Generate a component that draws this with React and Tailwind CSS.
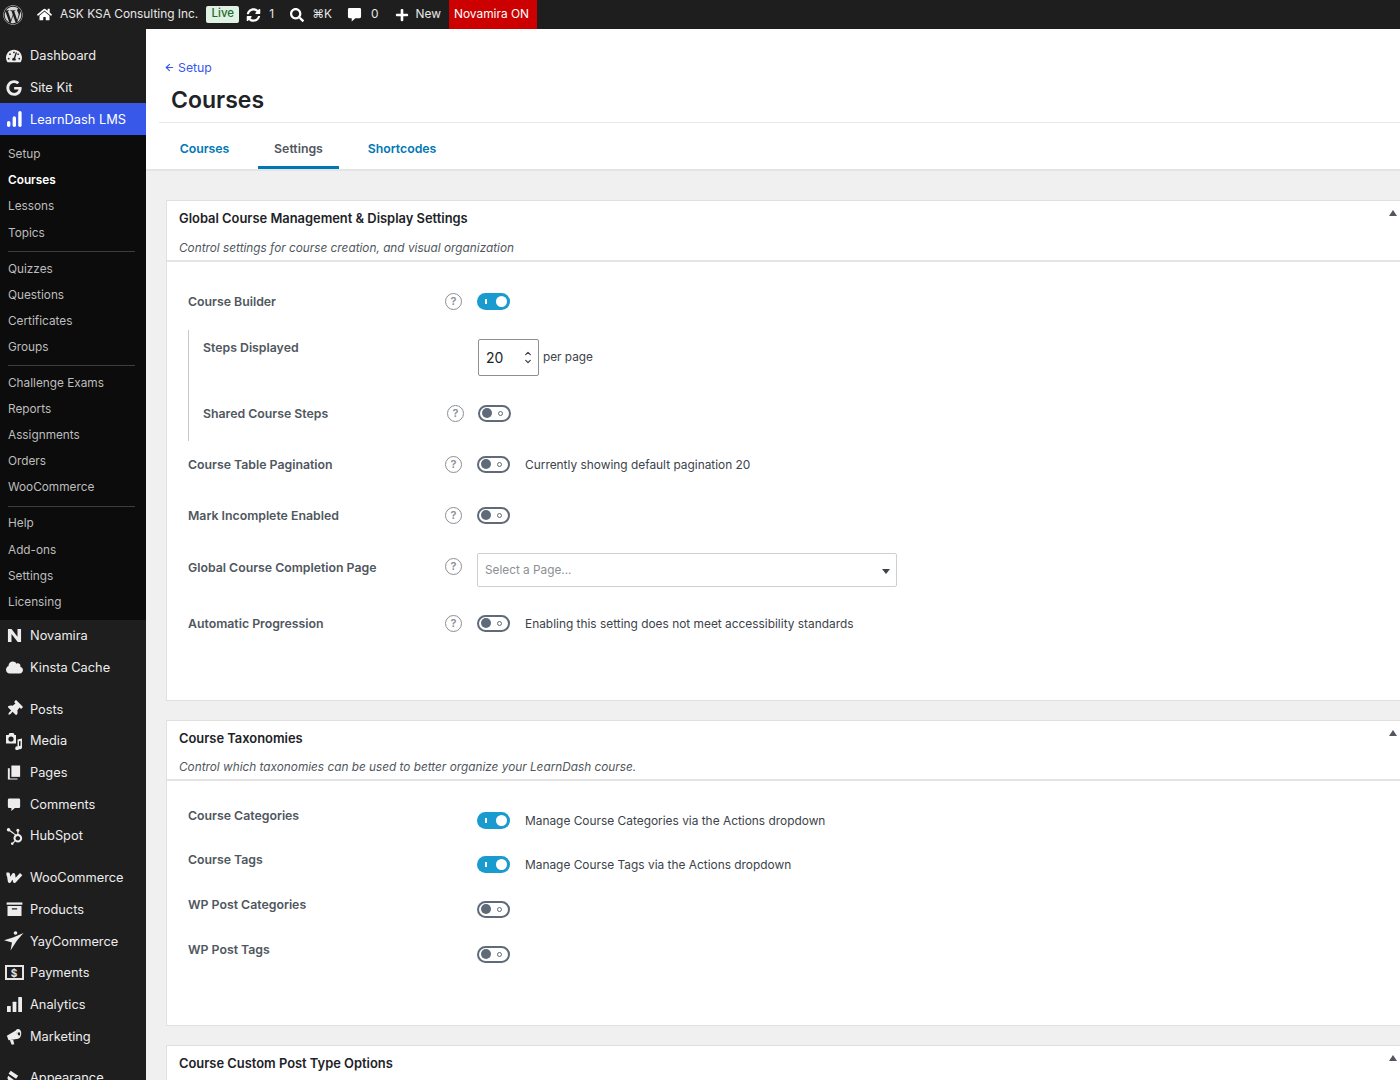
import React from 'react';
import { FaWordpress, FaHome, FaSyncAlt, FaSearch, FaPlus, FaTachometerAlt, FaGoogle, FaThumbtack, FaCloud, FaHubspot } from 'react-icons/fa';
import { ArrowLeft, ChevronUp, ChevronDown } from 'lucide-react';

const Bars = ({ className }) => (
    <svg viewBox="0 0 16 16" className={className} fill="currentColor">
        <rect x="0" y="9.5" width="4" height="6.5" rx="0.6" />
        <rect x="6" y="5" width="4" height="11" rx="0.6" />
        <rect x="12" y="0" width="4" height="16" rx="0.6" />
    </svg>
);

const RoundBars = ({ className }) => (
    <svg viewBox="0 0 16 17" className={className} fill="currentColor">
        <rect x="0" y="10.5" width="3.6" height="6.5" rx="1.8" />
        <rect x="6" y="5.5" width="3.6" height="11.5" rx="1.8" />
        <rect x="12" y="0" width="3.6" height="17" rx="1.8" />
    </svg>
);

const NIcon = ({ className }) => (
    <svg viewBox="0 0 16 16" className={className} fill="currentColor">
        <path d="M1 1h3.8l6.4 8.4V1H15v14h-3.6L4.8 6.4V15H1z" />
    </svg>
);

const MediaIcon = ({ className }) => (
    <svg viewBox="0 0 18 18" className={className} fill="currentColor">
        <path fillRule="evenodd" d="M1 3h2.5l1-2h4l1 2H11v8.5H1zM6 4.4a2.6 2.6 0 1 0 0 5.2 2.6 2.6 0 0 0 0-5.2z" />
        <path d="M12.5 7.5l4.5-1v9a1.8 1.8 0 1 1-1.5-1.8V9l-1.5.3v6.9A1.9 1.9 0 1 1 12.5 14.4z" />
    </svg>
);

const PagesIcon = ({ className }) => (
    <svg viewBox="0 0 16 16" className={className} fill="currentColor">
        <path d="M5 0h10v13H5z" />
        <path d="M1 3h2.2v11.8H12V16H1z" />
    </svg>
);

const BubbleIcon = ({ className }) => (
    <svg viewBox="0 0 16 16" className={className} fill="currentColor">
        <path d="M2.5 1h11A1.5 1.5 0 0 1 15 2.5v8a1.5 1.5 0 0 1-1.5 1.5H9l-4 3.5V12H2.5A1.5 1.5 0 0 1 1 10.5v-8A1.5 1.5 0 0 1 2.5 1z" />
    </svg>
);

const WooIcon = ({ className }) => (
    <svg viewBox="0 0 20 12" className={className} fill="none" stroke="currentColor" strokeWidth="3.4" strokeLinejoin="round">
        <path d="M1.5 2h2l1.2 7.5L9 2.5l1 7 L17 2" />
    </svg>
);

const BoxIcon = ({ className }) => (
    <svg viewBox="0 0 18 16" className={className} fill="currentColor">
        <rect x="0" y="0.5" width="18" height="2.6" />
        <path fillRule="evenodd" d="M1 4.5h16V16H1zM6 7v1.6h6V7z" />
    </svg>
);

const YayIcon = ({ className }) => (
    <svg viewBox="0 0 20 20" className={className} fill="currentColor">
        <circle cx="11.5" cy="2" r="1.8" />
        <path d="M0 9.2L9 6.5 19.5 2 13 9.5 6.5 19.5 8 11.5z" />
    </svg>
);

const PayIcon = () => (
    <span className="flex h-[15px] w-[19px] items-center justify-center border-2 border-[#e4e4e4] text-[10px] font-bold leading-none text-[#e4e4e4]">$</span>
);

const MegaphoneIcon = ({ className }) => (
    <svg viewBox="0 0 20 20" className={className} fill="currentColor">
        <path d="M1 9l10.5-6 3 9.5L3 14.5z" />
        <path fillRule="evenodd" d="M11.5 2.5c1.5-1.6 3.6-1.8 5-.3 1.8 2 2 6 .4 8.3-1.1 1.6-2.4 2.2-3.6 1.9zM15 5c-.9 0-1.4 1-1.2 2.2.2 1.1 1 1.9 1.8 1.7.8-.2 1.2-1.2 1-2.2-.2-1.1-.9-1.7-1.6-1.7z" />
        <path d="M4.5 14.5l4-.7 1.2 5.2-3 .6z" />
    </svg>
);

const BrushIcon = ({ className }) => (
    <svg viewBox="0 0 18 18" className={className} fill="currentColor">
        <path d="M5 1l9 6-2.5 3.5-9-6zM2 7l7 5-2 3-3.5-1L1 10z" />
    </svg>
);

const MenuItem = ({ icon, label, active, className = '' }) => (
    <div className={`flex h-[31.7px] items-center text-[12.8px] ${active ? 'bg-[#3858e9] text-white' : 'text-[#ededed]'} ${className}`}>
        <span className="mr-[2px] flex w-[28px] shrink-0 items-center justify-center">{icon}</span>
        <span>{label}</span>
    </div>
);

const SubItem = ({ label, current }) => (
    <div className={`flex h-[26.1px] items-center pl-2 text-[11.8px] ${current ? 'font-semibold text-white' : 'text-[#bdbdbd]'}`}>{label}</div>
);

const SubSep = () => <div className="my-[4.5px] ml-2 mr-[11px] h-px bg-[#3e3e3e]" />;

const Help = () => (
    <span className="flex h-[17px] w-[17px] shrink-0 items-center justify-center rounded-full border-[1.5px] border-[#8c8f94] text-[11px] font-semibold leading-none text-[#8c8f94]">?</span>
);

const Toggle = ({ on }) =>
    on ? (
        <span className="flex h-[17px] w-[33px] shrink-0 items-center justify-between rounded-full bg-[#1a9bd0] pl-[8px] pr-[3px]">
            <span className="h-[5px] w-[2px] bg-white" />
            <span className="h-[11px] w-[11px] rounded-full bg-white" />
        </span>
    ) : (
        <span className="flex h-[17px] w-[33px] shrink-0 items-center justify-between rounded-full border-2 border-[#5f6b78] pl-[2px] pr-[6px]">
            <span className="h-[10px] w-[10px] rounded-full bg-[#5f6b78]" />
            <span className="h-[5px] w-[5px] rounded-full border border-[#5f6b78]" />
        </span>
    );

const Label = ({ children, className = 'w-[257px] pt-[2px]' }) => (
    <div className={`shrink-0 text-[12.3px] font-semibold text-[#50575e] ${className}`}>{children}</div>
);

const Note = ({ children }) => <span className="ml-[15px] pt-[1px] text-[11.9px] text-[#3c434a]">{children}</span>;

const SettingRow = ({ label, on, note, className = '' }) => (
    <div className={`flex h-[34px] items-center ${className}`}>
        <Label>{label}</Label>
        <span className="w-[32px] shrink-0"><Help /></span>
        <Toggle on={on} />
        {note && <Note>{note}</Note>}
    </div>
);

// taxonomy rows have no help icon and the label sits a little above the toggle
const TaxRow = ({ label, on, note, className = '' }) => (
    <div className={`flex h-[34px] items-center ${className}`}>
        <Label className="w-[289px] pb-[8px]">{label}</Label>
        <Toggle on={on} />
        {note && <Note>{note}</Note>}
    </div>
);

const CardHeader = ({ title, desc, descClass = '' }) => (
    <div className="relative">
        <div className="px-3 pt-[8.5px] text-[12.9px] font-semibold leading-[17px] text-[#1d2327]">{title}</div>
        {desc && (
            <div className={`flex items-end border-b-2 border-[#e4e4e4] px-3 text-[11.8px] italic text-[#50575e] ${descClass}`}>{desc}</div>
        )}
        <span className="absolute right-[3px] top-[9px] h-0 w-0 border-x-[4px] border-b-[6px] border-x-transparent border-b-[#50575e]" />
    </div>
);

const App = () => {
    return (
        <div className="flex h-[1080px] w-[1400px] flex-col overflow-hidden bg-[#f0f0f0] font-['Inter',sans-serif]">
            {/* Admin bar */}
            <div className="flex h-[29px] shrink-0 items-center bg-[#1e1e1e] text-[11.9px] text-[#e8e8e8]">
                <FaWordpress className="ml-[3px] h-[20px] w-[20px] text-[#d4d4d4]" />
                <FaHome className="ml-[14px] h-[15px] w-[15px] text-white" />
                <span className="ml-[8px] pb-[2px]">ASK KSA Consulting Inc.</span>
                <span className="ml-[8px] mb-[1px] flex h-[17px] w-[33px] items-center justify-center rounded-[2px] bg-[#e0f2e3] text-[11.5px] font-medium text-[#1e6b2c]">Live</span>
                <FaSyncAlt className="ml-[7px] h-[14px] w-[15px] text-white" />
                <span className="ml-[8px] pb-[2px]">1</span>
                <FaSearch className="ml-[16px] h-[14px] w-[14px] text-white" />
                <span className="ml-[8px] pb-[2px]">⌘K</span>
                <BubbleIcon className="ml-[15px] h-[15px] w-[15px] text-white" />
                <span className="ml-[9px] pb-[2px]">0</span>
                <FaPlus className="ml-[16px] h-[14px] w-[14px] text-white" />
                <span className="ml-[7px] pb-[2px]">New</span>
                <span className="ml-[8px] flex h-full w-[88px] items-center justify-center bg-[#cc0000] pb-[2px] pr-[3px] text-white">Novamira ON</span>
            </div>

            <div className="flex min-h-0 flex-1">
                {/* Sidebar */}
                <div className="w-[146px] shrink-0 overflow-hidden bg-[#1e1e1e] pt-[11px]">
                    <MenuItem icon={<FaTachometerAlt className="h-[16px] w-[16px]" />} label="Dashboard" />
                    <MenuItem icon={<FaGoogle className="h-[16px] w-[16px]" />} label="Site Kit" />
                    <MenuItem icon={<RoundBars className="h-[16px] w-[15px]" />} label="LearnDash LMS" active />
                    <div className="h-[485px] bg-[#0c0c0c] pt-[7px]">
                        <SubItem label="Setup" />
                        <SubItem label="Courses" current />
                        <SubItem label="Lessons" />
                        <SubItem label="Topics" />
                        <SubSep />
                        <SubItem label="Quizzes" />
                        <SubItem label="Questions" />
                        <SubItem label="Certificates" />
                        <SubItem label="Groups" />
                        <SubSep />
                        <SubItem label="Challenge Exams" />
                        <SubItem label="Reports" />
                        <SubItem label="Assignments" />
                        <SubItem label="Orders" />
                        <SubItem label="WooCommerce" />
                        <SubSep />
                        <SubItem label="Help" />
                        <SubItem label="Add-ons" />
                        <SubItem label="Settings" />
                        <SubItem label="Licensing" />
                    </div>
                    <MenuItem icon={<NIcon className="h-[15px] w-[15px]" />} label="Novamira" />
                    <MenuItem icon={<FaCloud className="h-[15px] w-[17px]" />} label="Kinsta Cache" />
                    <MenuItem className="mt-[10px]" icon={<FaThumbtack className="h-[16px] w-[16px] rotate-45" />} label="Posts" />
                    <MenuItem icon={<MediaIcon className="h-[18px] w-[18px]" />} label="Media" />
                    <MenuItem icon={<PagesIcon className="h-[15px] w-[14px]" />} label="Pages" />
                    <MenuItem icon={<BubbleIcon className="h-[15px] w-[14px]" />} label="Comments" />
                    <MenuItem icon={<FaHubspot className="h-[17px] w-[17px]" />} label="HubSpot" />
                    <MenuItem className="mt-[10px]" icon={<WooIcon className="h-[12px] w-[19px]" />} label="WooCommerce" />
                    <MenuItem icon={<BoxIcon className="h-[14px] w-[17px]" />} label="Products" />
                    <MenuItem icon={<YayIcon className="h-[20px] w-[20px]" />} label="YayCommerce" />
                    <MenuItem icon={<PayIcon />} label="Payments" />
                    <MenuItem icon={<Bars className="h-[15px] w-[15px]" />} label="Analytics" />
                    <MenuItem icon={<MegaphoneIcon className="h-[17px] w-[17px]" />} label="Marketing" />
                    <MenuItem className="mt-[10px]" icon={<BrushIcon className="h-[15px] w-[16px]" />} label="Appearance" />
                </div>

                {/* Main */}
                <div className="min-w-0 flex-1 overflow-hidden">
                    <div className="h-[142px] border-b-2 border-[#e4e4e4] bg-white pl-[13px]">
                        <div className="flex items-center gap-[3px] pl-[5px] pt-[30px] text-[12.3px] leading-[17px] text-[#3858e9]">
                            <ArrowLeft className="h-[11px] w-[11px]" strokeWidth={2.5} />
                            Setup
                        </div>
                        <div className="border-b border-[#e8e8e8] pb-[5px] pl-[12px] pt-[7px] text-[23px] font-semibold leading-[34px] text-[#1d2327]">Courses</div>
                        <div className="flex h-[46px] text-[12.3px] font-semibold">
                            <div className="flex w-[91px] items-center justify-center pt-[7px] text-[#0077b6]">Courses</div>
                            <div className="ml-[8px] flex w-[81px] items-center justify-center border-b-[3px] border-[#0077b6] pt-[10px] text-[#50575e]">Settings</div>
                            <div className="flex w-[126px] items-center justify-center pt-[7px] text-[#0077b6]">Shortcodes</div>
                        </div>
                    </div>

                    <div className="pl-[20px] pt-[29px]">
                        {/* Global settings */}
                        <div className="h-[501px] border border-r-0 border-[#e0e0e0] bg-white">
                            <CardHeader title="Global Course Management & Display Settings" desc="Control settings for course creation, and visual organization" descClass="h-[35.5px] pb-[2px]" />
                            <div className="pl-[21px] pt-[22px]">
                                <SettingRow label="Course Builder" on />
                                <div className="mt-[12px] h-[111px] border-l border-[#c9c9c9] pl-[14px]">
                                    <div className="flex h-[66px] items-start">
                                        <Label className="w-[275px] pt-[9px]">Steps Displayed</Label>
                                        <div className="mt-[9px] flex h-[37px] w-[61px] items-center justify-between rounded-[2px] border border-[#8c8f94] pl-[7px] pr-[4px] text-[14px] text-[#1d2327]">
                                            20
                                            <span className="flex flex-col text-[#3c434a]">
                                                <ChevronUp className="-mb-[1px] h-[9px] w-[12px]" strokeWidth={3.5} />
                                                <ChevronDown className="h-[9px] w-[12px]" strokeWidth={3.5} />
                                            </span>
                                        </div>
                                        <span className="ml-[4px] mt-[19px] text-[11.8px] text-[#3c434a]">per page</span>
                                    </div>
                                    <div className="flex h-[34px] items-center">
                                        <Label className="w-[244px] pt-[2px]">Shared Course Steps</Label>
                                        <span className="w-[31px] shrink-0"><Help /></span>
                                        <Toggle />
                                    </div>
                                </div>
                                <SettingRow className="mt-[6px]" label="Course Table Pagination" note="Currently showing default pagination 20" />
                                <SettingRow className="mt-[17px]" label="Mark Incomplete Enabled" />
                                <div className="mt-[17px] flex h-[34px] items-center">
                                    <Label className="w-[257px] pt-[4px]">Global Course Completion Page</Label>
                                    <span className="w-[32px] shrink-0"><Help /></span>
                                    <div className="mt-[8px] flex h-[34px] w-[420px] items-center justify-between rounded-[2px] border border-[#cfcfcf] pl-[7px] pr-[6px] pt-[2px] text-[11.8px] text-[#8c8f94]">
                                        Select a Page...
                                        <span className="h-0 w-0 border-x-[4px] border-t-[5px] border-x-transparent border-t-[#3c434a]" />
                                    </div>
                                </div>
                                <SettingRow className="mt-[23px]" label="Automatic Progression" note="Enabling this setting does not meet accessibility standards" />
                            </div>
                        </div>

                        {/* Taxonomies */}
                        <div className="mt-[19px] h-[306px] border border-r-0 border-[#e0e0e0] bg-white">
                            <CardHeader title="Course Taxonomies" desc="Control which taxonomies can be used to better organize your LearnDash course." descClass="h-[34.5px] pb-[2px]" />
                            <div className="pl-[21px] pt-[22px]">
                                <TaxRow label="Course Categories" on note="Manage Course Categories via the Actions dropdown" />
                                <TaxRow className="mt-[10.7px]" label="Course Tags" on note="Manage Course Tags via the Actions dropdown" />
                                <TaxRow className="mt-[10.7px]" label="WP Post Categories" />
                                <TaxRow className="mt-[10.7px]" label="WP Post Tags" />
                            </div>
                        </div>

                        {/* Custom post type */}
                        <div className="mt-[19px] h-[60px] border border-r-0 border-[#e0e0e0] bg-white">
                            <CardHeader title="Course Custom Post Type Options" />
                        </div>
                    </div>
                </div>
            </div>
        </div>
    );
};

export default App;
